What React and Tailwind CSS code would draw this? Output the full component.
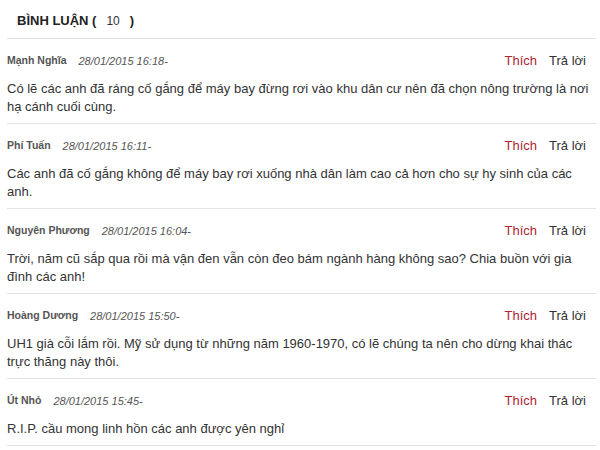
import React from "react";

const comments = [
  {
    name: "Mạnh Nghĩa",
    date: "28/01/2015 16:18-",
    text: "Có lẽ các anh đã ráng cố gắng để máy bay đừng rơi vào khu dân cư nên đã chọn nông trường là nơi hạ cánh cuối cùng.",
  },
  {
    name: "Phí Tuấn",
    date: "28/01/2015 16:11-",
    text: "Các anh đã cố gắng không để máy bay rơi xuống nhà dân làm cao cả hơn cho sự hy sinh của các anh.",
  },
  {
    name: "Nguyên Phương",
    date: "28/01/2015 16:04-",
    text: "Trời, năm cũ sắp qua rồi mà vận đen vẫn còn đeo bám ngành hàng không sao? Chia buồn với gia đình các anh!",
  },
  {
    name: "Hoàng Dương",
    date: "28/01/2015 15:50-",
    text: "UH1 già cỗi lắm rồi. Mỹ sử dụng từ những năm 1960-1970, có lẽ chúng ta nên cho dừng khai thác trực thăng này thôi.",
  },
  {
    name: "Út Nhỏ",
    date: "28/01/2015 15:45-",
    text: "R.I.P. cầu mong linh hồn các anh được yên nghỉ",
  },
];

export default function App() {
  return (
    <div
      className="w-[600px] h-[450px] overflow-hidden bg-white text-[#333]"
      style={{ fontFamily: '"Liberation Sans", Arial, sans-serif' }}
    >
      <div className="ml-[7px] mr-[4px]">
        <div className="h-[39px] border-b border-[#e3e3e3] pl-[10px] pt-[12px]">
          <div className="text-[13px] leading-[18px] font-bold text-[#222] flex items-center">
            <span>BÌNH LUẬN (</span>
            <span className="font-normal text-[12px] mx-[10px] text-[#333]">10</span>
            <span>)</span>
          </div>
        </div>
        {comments.map((c, i) => (
          <div key={i} className="border-b border-[#e3e3e3] pt-[13px] pb-[7px]">
            <div className="flex items-center h-[18px] pr-[10px]">
              <span className="text-[10.5px] font-bold text-[#555]">{c.name}</span>
              <span className="ml-[12px] text-[11px] italic text-[#555]">{c.date}</span>
              <span className="ml-auto text-[13px] text-[#ad2530]">Thích</span>
              <span className="ml-[12px] text-[13px] text-[#333]">Trả lời</span>
            </div>
            <p className="mt-[10px] text-[13px] leading-[18px] text-[#333] pr-[4px]">{c.text}</p>
          </div>
        ))}
      </div>
    </div>
  );
}
